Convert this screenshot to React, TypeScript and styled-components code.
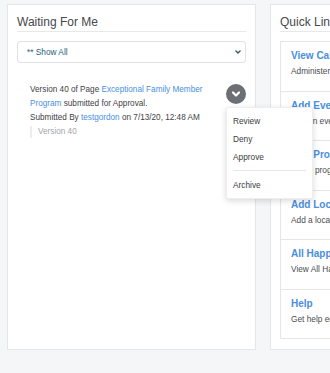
import { ReactElement } from 'react';
import styled, { createGlobalStyle } from 'styled-components';

const GlobalStyle = createGlobalStyle`
    html, body {
        margin: 0;
        padding: 0;
        overflow: hidden;
        background: #f5f6f8;
        font-family: 'Liberation Sans', Arial, Helvetica, sans-serif;
        color: #3f4246;
    }
`;

const Page = styled.div`
    display: flex;
    align-items: stretch;
    gap: 14px;
    padding: 4px 7px;
    width: 560px;
    min-height: 373px;
    box-sizing: border-box;
    align-self: flex-start;
`;

const Panel = styled.section`
    flex: 0 0 249px;
    box-sizing: border-box;
    background: #ffffff;
    border: 1px solid #e4e6e9;
    padding: 10px 9px 10px 9px;
    align-self: flex-start;
    height: 346px;
`;

const PanelTitle = styled.h2`
    margin: 0 0 9px;
    padding-bottom: 2px;
    font-size: 12px;
    line-height: 14px;
    font-weight: 400;
    color: #45484c;
    border-bottom: 1px solid #e6e8eb;
`;

const SelectBox = styled.div`
    display: flex;
    align-items: center;
    justify-content: space-between;
    height: 22px;
    box-sizing: border-box;
    padding: 0 3px 0 9px;
    border: 1px solid #dfe2e6;
    border-radius: 3px;
    font-size: 8.3px;
    color: #2d5d78;
`;

const Item = styled.div`
    position: relative;
    margin-top: 20px;
    padding: 0 30px 0 13px;
    font-size: 8.2px;
    line-height: 14px;
    color: #3f4246;

    & a {
        color: #4a90e2;
        text-decoration: none;
    }
`;

const VersionNote = styled.div`
    margin-top: 1px;
    padding-left: 6px;
    border-left: 2px solid #eceef0;
    line-height: 12px;
    color: #a3a6a9;
`;

const ActionWrap = styled.div`
    position: absolute;
    top: 1px;
    right: 0;
`;

const ActionButton = styled.div`
    width: 20px;
    height: 20px;
    border-radius: 50%;
    background: #6c6f73;
    display: flex;
    align-items: center;
    justify-content: center;
`;

const Menu = styled.div`
    position: absolute;
    top: 23px;
    left: 0;
    width: 87px;
    box-sizing: border-box;
    padding: 4px 0 4px;
    background: #ffffff;
    border: 1px solid #eceef0;
    border-radius: 2px;
    box-shadow: 0 2px 6px rgba(0, 0, 0, 0.15);
    z-index: 2;
`;

const MenuItem = styled.div`
    padding: 0 6px;
    font-size: 8.3px;
    line-height: 18px;
    color: #3a3d41;
`;

const MenuDivider = styled.div`
    height: 1px;
    margin: 4px 6px 5px;
    background: #e6e8eb;
`;

const LinkList = styled.div`
    border: 1px solid #e4e6e9;
    width: 260px;
`;

const LinkItem = styled.div`
    padding: 7px 10px 13.5px;
    & + & {
        border-top: 1px solid #e4e6e9;
    }
`;

const LinkTitle = styled.div`
    font-size: 10px;
    font-weight: 700;
    line-height: 13px;
    color: #4a8ee0;
    margin-bottom: 3px;
    white-space: nowrap;
`;

const LinkDesc = styled.div`
    font-size: 8.3px;
    line-height: 12px;
    color: #4a4d51;
    white-space: nowrap;
`;

const quickLinks = [
    { title: 'View Calendar', desc: 'Administer the calendar' },
    { title: 'Add Event', desc: 'Add an event to the calendar' },
    { title: 'Add Program', desc: 'Add a program to the calendar' },
    { title: 'Add Location', desc: 'Add a location' },
    { title: 'All Happenings', desc: 'View All Happenings' },
    { title: 'Help', desc: 'Get help editing' },
];

const App = (): ReactElement => {
    return (
        <>
            <GlobalStyle />
            <Page>
                <Panel>
                    <PanelTitle>Waiting For Me</PanelTitle>
                    <SelectBox>
                        <span>** Show All</span>
                        <svg width="8" height="8" viewBox="0 0 8 8">
                            <polyline points="1.5,2.5 4,5 6.5,2.5" fill="none" stroke="#3b5566" strokeWidth="1.3" />
                        </svg>
                    </SelectBox>
                    <Item>
                        <div>
                            Version 40 of Page <a href="#">Exceptional Family Member Program</a> submitted for
                            Approval.
                        </div>
                        <div>
                            Submitted By <a href="#">testgordon</a> on 7/13/20, 12:48 AM
                        </div>
                        <VersionNote>Version 40</VersionNote>
                        <ActionWrap>
                            <ActionButton>
                                <svg width="10" height="10" viewBox="0 0 10 10">
                                    <polyline
                                        points="2,3.5 5,6.5 8,3.5"
                                        fill="none"
                                        stroke="#ffffff"
                                        strokeWidth="2.2"
                                        strokeLinecap="round"
                                        strokeLinejoin="round"
                                    />
                                </svg>
                            </ActionButton>
                            <Menu>
                                <MenuItem>Review</MenuItem>
                                <MenuItem>Deny</MenuItem>
                                <MenuItem>Approve</MenuItem>
                                <MenuDivider />
                                <MenuItem>Archive</MenuItem>
                            </Menu>
                        </ActionWrap>
                    </Item>
                </Panel>
                <Panel>
                    <PanelTitle>Quick Links</PanelTitle>
                    <LinkList>
                        {quickLinks.map((link, index) => (
                            <LinkItem key={`quickLink-${index}`}>
                                <LinkTitle>{link.title}</LinkTitle>
                                <LinkDesc>{link.desc}</LinkDesc>
                            </LinkItem>
                        ))}
                    </LinkList>
                </Panel>
            </Page>
        </>
    );
};

export default App;
